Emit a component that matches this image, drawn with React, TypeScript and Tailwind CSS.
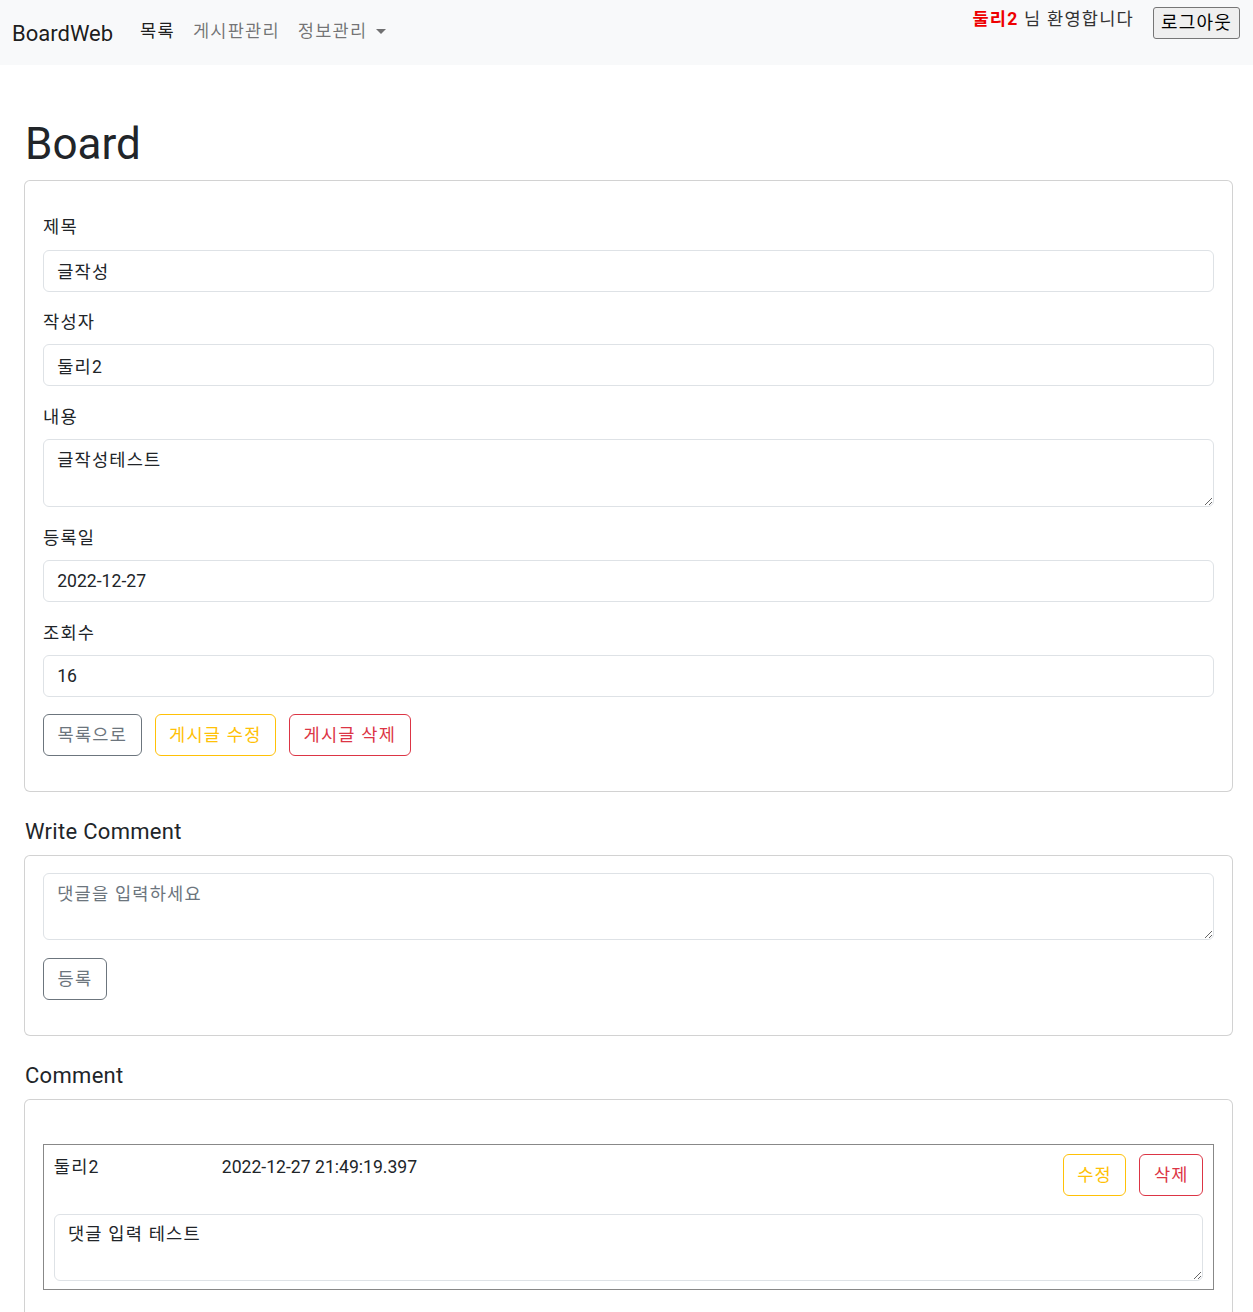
import { type ReactNode } from 'react'

const FONT = "font-['Roboto','Noto_Sans_CJK_KR',sans-serif]"
// Noto CJK hangul runs a bit narrower than the original Malgun Gothic
const KO = 'tracking-[1.2px]'

const FIELDS = [
  { label: '제목', value: '글작성' },
  { label: '작성자', value: '둘리2' },
  { label: '내용', value: '글작성테스트', area: true },
  { label: '등록일', value: '2022-12-27', latin: true },
  { label: '조회수', value: '16', latin: true },
]

// Bootstrap-style board detail page (browser zoom ~110%): navbar, post card,
// comment writer and the comment list.
export default function App() {
  return (
    <div className={`${FONT} text-[17.6px] leading-[1.5] text-[#212529] bg-white min-h-[1312px]`}>
      <Navbar />

      <div className="pl-[24px] pr-[20px]">
        <h1 className="mt-[53px] mb-[9px] text-[44px] leading-[1.2] font-normal pl-[1px]">Board</h1>

        {/* Post */}
        <Card>
          <div className="pt-[16px]">
            {FIELDS.map((f) => (
              <div key={f.label} className="mb-[17.6px]">
                <label className={`block mb-[8.8px] ${KO}`}>{f.label}</label>
                {f.area ? (
                  <textarea
                    readOnly
                    rows={2}
                    defaultValue={f.value}
                    className={`block w-full h-[68px] px-[13.2px] py-[6.6px] border border-[#dee2e6] rounded-[6px] outline-none ${KO}`}
                  />
                ) : (
                  <input
                    readOnly
                    defaultValue={f.value}
                    className={`block w-full h-[42px] px-[13.2px] border border-[#dee2e6] rounded-[6px] outline-none ${f.latin ? '' : KO}`}
                  />
                )}
              </div>
            ))}
            <div className="flex gap-[13px] mb-[17.6px]">
              <Btn color="secondary">목록으로</Btn>
              <Btn color="warning">게시글 수정</Btn>
              <Btn color="danger">게시글 삭제</Btn>
            </div>
          </div>
        </Card>

        {/* Write comment */}
        <h5 className="mt-[27px] mb-[9px] text-[22px] leading-[1.2] font-normal pl-[1px] tracking-[0.3px]">Write Comment</h5>
        <Card>
          <textarea
            rows={2}
            placeholder="댓글을 입력하세요"
            className={`block w-full h-[67px] px-[13.2px] py-[6.6px] border border-[#dee2e6] rounded-[6px] outline-none placeholder:text-[#6c757d] ${KO}`}
          />
          <div className="mt-[17.6px] mb-[17.6px]">
            <Btn color="secondary">등록</Btn>
          </div>
        </Card>

        {/* Comments */}
        <h5 className="mt-[27px] mb-[9px] text-[22px] leading-[1.2] font-normal pl-[1px] tracking-[0.3px]">Comment</h5>
        <Card>
          <div className="pt-[27px] pb-[17.6px]">
            <div className="border border-[#888] px-[9.8px] pt-[8.8px] pb-[8.8px]">
              <div className="flex items-start">
                <span className={`w-[168px] ${KO}`}>둘리2</span>
                <span>2022-12-27 21:49:19.397</span>
                <div className="ml-auto flex gap-[13px]">
                  <Btn color="warning">수정</Btn>
                  <Btn color="danger">삭제</Btn>
                </div>
              </div>
              <textarea
                readOnly
                rows={2}
                defaultValue="댓글 입력 테스트"
                className={`mt-[17.6px] block w-full h-[67px] px-[13.2px] py-[6.6px] border border-[#dee2e6] rounded-[6px] outline-none ${KO}`}
              />
            </div>
          </div>
        </Card>
      </div>
    </div>
  )
}

function Navbar() {
  return (
    <nav className="h-[65px] bg-[#f8f9fa] flex items-start pl-[12px] pr-[13px]">
      <div className="flex items-center h-full pb-[2px]">
        <span className="text-[22px] text-black/90 mr-[18px] pt-[3px]">BoardWeb</span>
        <a className={`px-[9px] text-black/90 ${KO}`}>목록</a>
        <a className={`px-[9px] text-black/55 ${KO}`}>게시판관리</a>
        <a className={`px-[9px] text-black/55 flex items-center ${KO}`}>
          정보관리
          <span className="ml-[9px] mt-[1px] w-0 h-0 border-x-[5px] border-x-transparent border-t-[5.5px] border-t-black/55" />
        </a>
      </div>
      <div className="ml-auto flex items-start pt-[6px]">
        <span className={`text-[#333] ${KO}`}>
          <b className="text-[#e00] font-bold">둘리2</b> 님 환영합니다
        </span>
        <button className={`ml-[19px] mt-[1px] h-[32px] px-[7px] bg-[#efefef] border border-[#767676] rounded-[3px] text-black text-[18px] leading-none ${KO}`}>
          로그아웃
        </button>
      </div>
    </nav>
  )
}

function Card({ children }: { children: ReactNode }) {
  return (
    <div className="border border-black/[0.175] rounded-[6px] px-[18px] py-[17.6px] bg-white">{children}</div>
  )
}

function Btn({ color, children }: { color: 'secondary' | 'warning' | 'danger'; children: ReactNode }) {
  const cls =
    color === 'secondary'
      ? 'border-[#6c757d] text-[#6c757d]'
      : color === 'warning'
        ? 'border-[#ffc107] text-[#ffc107]'
        : 'border-[#dc3545] text-[#dc3545]'
  return (
    <button className={`h-[42px] px-[13.5px] border rounded-[6px] bg-transparent leading-[1.5] ${KO} ${cls}`}>{children}</button>
  )
}
